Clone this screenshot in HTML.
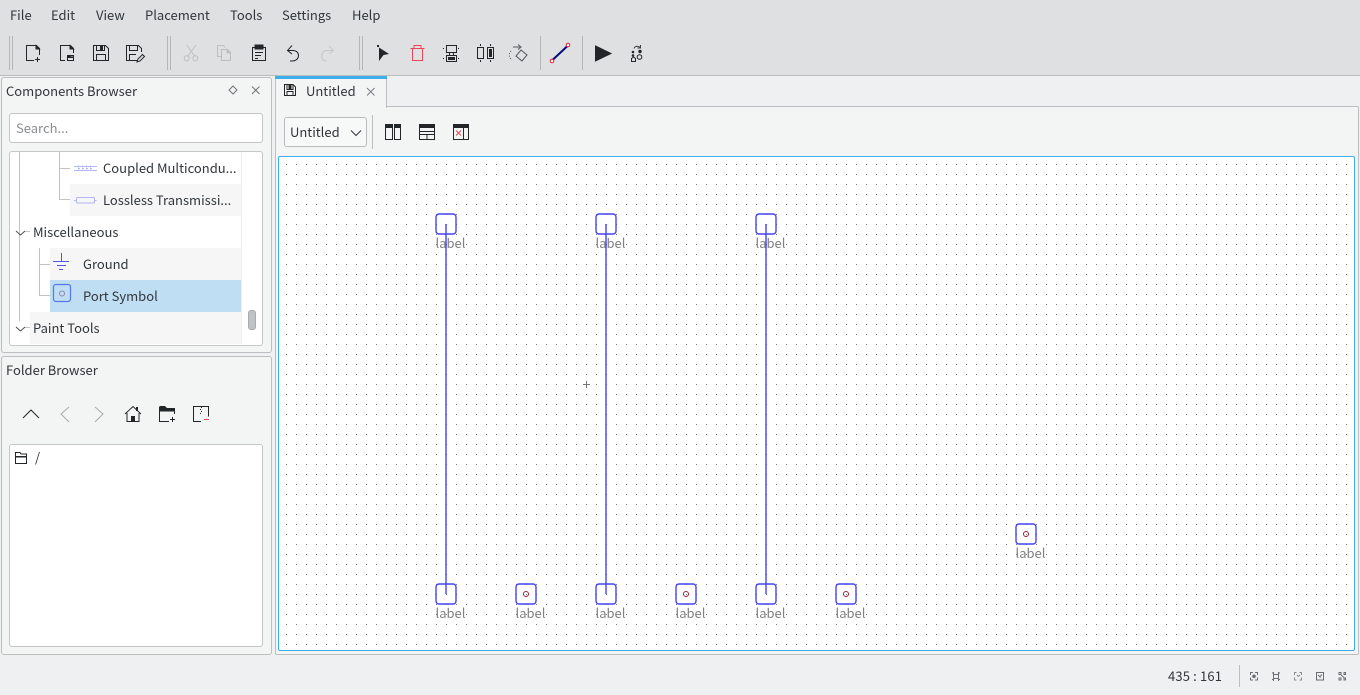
<!DOCTYPE html>
<html>
<head>
<meta charset="utf-8">
<style>
html,body{margin:0;padding:0;width:1360px;height:695px;overflow:hidden;background:#eff0f1;}
body{position:relative;font-family:"Noto Sans CJK SC","DejaVu Sans","Liberation Sans",sans-serif;font-size:13px;color:#31363b;}
.a{position:absolute;box-sizing:border-box;}
.t{position:absolute;white-space:nowrap;line-height:18px;height:18px;}
svg{position:absolute;overflow:visible;}
</style>
</head>
<body>
<div class="a" style="left:0;top:0;width:1360px;height:76px;background:#dee0e2;border-bottom:1px solid #b9bbbd;"></div>

<span class="t" style="left:10px;top:6px;">File</span>
<span class="t" style="left:51px;top:6px;">Edit</span>
<span class="t" style="left:96px;top:6px;">View</span>
<span class="t" style="left:145px;top:6px;">Placement</span>
<span class="t" style="left:230px;top:6px;">Tools</span>
<span class="t" style="left:282px;top:6px;">Settings</span>
<span class="t" style="left:352px;top:6px;">Help</span>

<!-- Toolbar icons -->
<svg style="left:0;top:0" width="680" height="76" fill="none" stroke="#232629" stroke-width="1">
  <g stroke="#b4b6b8">
    <path d="M9.500 36v34M12.500 36v34M167.500 36v34M170.500 36v34M359.500 36v34M362.500 36v34M540.500 36v34M582.500 36v34"/>
  </g>
  <!-- new -->
  <path d="M34 60.500H26.500V45.500H36.500L39.500 48.500V55"/><path d="M36 45.500l3.500 3.500h-3.500z" fill="#232629"/><path d="M35 59.500h5M37.500 57v5"/>
  <!-- open -->
  <path d="M65 60.500H60.500V45.500H70.500L73.500 48.500V53"/><path d="M70 45.500l3.500 3.500h-3.500z" fill="#232629"/><path d="M67 55h3l1 1.500h3V58h-7z" fill="#232629" stroke="none"/><rect x="67.500" y="55.500" width="6" height="5"/>
  <!-- save -->
  <path d="M93.500 45.500V60.500H108.500V48.500L105.500 45.500Z"/><path d="M96.500 45.500V50.500H104.500V45.500M96.500 60.500V54.500H105.500V60.500"/><path d="M100 46h3v4h-3z" fill="#232629" stroke="none"/>
  <!-- save as -->
  <path d="M138 60.500H126.500V45.500H138.500L141.500 48.500V52"/><path d="M129.500 45.500V50.500H137.500V45.500M129.500 60.500V54.500H136"/><path d="M137 62l1-3 4.500-4.500 2 2L140 61z" stroke-width="1"/>
  <!-- cut -->
  <g stroke="#bdbfc1"><path d="M186.700 45L195 56.500M196 45L187.500 56.500"/><circle cx="186.700" cy="58.300" r="2.500"/><circle cx="195.300" cy="58.300" r="2.500"/></g>
  <!-- copy -->
  <g stroke="#bdbfc1"><path d="M221 56.500H217.500V45.500H223.500L225 47.500"/><path d="M221.500 60.500V49.500H227.500L230.500 52.500V60.500Z"/><path d="M227 49.500l3.500 3.500h-3.500z" fill="#bdbfc1"/></g>
  <!-- paste -->
  <path d="M252.500 47.500V60.500H265.500V47.500Z"/><path d="M255 45h8v4h-8z" fill="#232629" stroke="#232629"/><path d="M255 52.500h8M255 55.500h6M255 58.500h3"/>
  <!-- undo -->
  <path d="M288 50.500H293C300.500 50.500 300.500 61 292 61H290"/><path d="M292 45.500L287.500 50.500L292 54"/>
  <!-- redo -->
  <g stroke="#c4c6c8"><path d="M333 50.500H327C320 50.500 320 61 326 61"/><path d="M329 46l4.500 4.500L329 54"/></g>
  <!-- select -->
  <rect x="377" y="45" width="2" height="2" fill="#232629" stroke="none"/>
  <path d="M379 47.500L389 54L383.500 55L379 61Z" fill="#232629" stroke="none"/>
  <!-- delete -->
  <g stroke="#e8475a"><path d="M410.500 48.500H424.500M414 48V45.500H421V48M412.500 48.500V60.500H422.500V48.500"/></g>
  <!-- group -->
  <path d="M446.500 45.500h10v7h-10zM449.500 52.500v3M453.500 52.500v3"/><rect x="446.500" y="55.500" width="10" height="6"/><rect x="448" y="57" width="7" height="3" fill="#232629" stroke="none"/>
  <path d="M443 48.500h2M458 48.500h2M443 58.500h2M458 58.500h2" stroke-dasharray="1 1"/>
  <!-- mirror -->
  <path d="M477.500 47.500h6v11h-6z"/><rect x="487.500" y="47.500" width="6" height="11"/><rect x="489" y="49" width="3" height="8" fill="#232629" stroke="none"/><path d="M480.500 44v2M490.500 44v2M480.500 60v2M490.500 60v2"/>
  <!-- rotate -->
  <path d="M511 51a6 6 0 0 0 1 9" stroke-dasharray="1 1.500" stroke="#55595d"/><path d="M513 47h7M518 44.500l3 2.500-3 2.500" stroke="#55595d"/><path d="M521 50l6 5-5 6-6-5z" stroke="#55595d"/>
  <!-- wire -->
  <path d="M552 60.500L568 45.500" stroke="#0a0a80" stroke-width="2"/>
  <circle cx="552" cy="61" r="1.800" stroke="#e8192c" fill="#fff"/><circle cx="568" cy="45" r="1.800" stroke="#e8192c" fill="#fff"/>
  <!-- play -->
  <path d="M595.500 46L611 53.500L595.500 61Z" fill="#232629" stroke="#232629"/>
  <!-- simulation settings -->
  <path d="M634 48.500a3.500 3.500 0 0 1 6-1M640.500 45v3h-3" stroke="#3a3d40"/><circle cx="633" cy="52" r="1.300" fill="#232629" stroke="none"/><circle cx="640" cy="51.500" r="1.700" fill="#232629" stroke="none"/><circle cx="633" cy="55.500" r="1.300" fill="#232629" stroke="none"/><circle cx="639.500" cy="57" r="2.300"/><path d="M631.500 61.500v-3l2-1.500 2 1.500v3z"/>
</svg>

<!-- Components Browser -->
<div class="a" style="left:1px;top:77px;width:271px;height:276px;background:#f3f5f5;border:1px solid #bcbebf;border-radius:3px;"></div>
<span class="t" style="left:6px;top:82px;">Components Browser</span>
<div class="a" style="left:9px;top:113px;width:254px;height:30px;background:#fff;border:1px solid #c4c6c8;border-radius:3px;"></div>
<span class="t" style="left:16px;top:119px;color:#8a8d90;">Search...</span>
<div class="a" style="left:9px;top:151px;width:254px;height:195px;background:#fff;border:1px solid #c4c6c8;border-radius:3px;"></div>
<div class="a" style="left:70px;top:184px;width:171px;height:32px;background:#f6f6f6;"></div>
<div class="a" style="left:50px;top:248px;width:191px;height:32px;background:#f6f6f6;"></div>
<div class="a" style="left:50px;top:280px;width:191px;height:32px;background:#bfdef4;"></div>
<div class="a" style="left:30px;top:312px;width:211px;height:32px;background:#f6f6f6;"></div>
<div class="a" style="left:241px;top:152px;width:1px;height:192px;background:#eeeeee;"></div>
<div class="a" style="left:248px;top:310px;width:8px;height:20px;background:#c0c2c3;border:1px solid #a8aaac;border-radius:3px;"></div>

<svg style="left:0;top:0" width="275" height="360" fill="none" stroke="#c3c3c3" stroke-width="1">
  <path d="M19.500 152V321M59.500 152V199.500H70M59.500 168.500H70M39.500 248V295.500H50M39.500 264.500H50"/>
  <g stroke="#4a4f54"><path d="M16 231l4.500 4 4.500-4M16 327l4.500 4 4.500-4"/></g>
  <path d="M25 231.500h5M25 327.500h5" stroke="#c3c3c3"/>
  <!-- dock icons -->
  <g stroke="#6f7376"><path d="M233 86l4 4-4 4-4-4zM252 86.500l7.500 7.500M259.500 86.500l-7.500 7.500"/><path d="M233 365l4 4-4 4-4-4zM252 365l7.500 7.500M259.500 365l-7.500 7.500"/></g>
  <!-- coupled -->
  <g stroke="#b4b4fa"><path d="M74 166.500H97M74 170.500H97"/><path d="M78.500 165.500v6M82.500 165.500v6M86.500 165.500v6M90.500 165.500v6" stroke-dasharray="1 1"/><path d="M78 168.500H92" stroke-dasharray="2 2"/></g>
  <!-- lossless -->
  <g stroke="#b4b4fa"><rect x="76.500" y="197.500" width="18" height="5.500" rx="1"/><path d="M74 200.500h2.500M94.500 200.500h2"/></g>
  <!-- ground -->
  <g stroke="#5353ee"><path d="M61.500 253V262M53 261.500H69M57 265.500H66M59 269.500H63"/></g>
  <!-- port -->
  <rect x="53.500" y="284.500" width="17" height="17" rx="2.500" stroke="#5577f0" stroke-width="1.200"/>
  <circle cx="62" cy="293.500" r="2.500" stroke="#8f86a6"/>
</svg>

<span class="t" style="left:103px;top:159px;">Coupled Multicondu...</span>
<span class="t" style="left:103px;top:191px;">Lossless Transmissi...</span>
<span class="t" style="left:33px;top:223px;">Miscellaneous</span>
<span class="t" style="left:83px;top:255px;">Ground</span>
<span class="t" style="left:83px;top:287px;">Port Symbol</span>
<span class="t" style="left:33px;top:319px;">Paint Tools</span>

<!-- Folder Browser -->
<div class="a" style="left:1px;top:356px;width:271px;height:299px;background:#f3f5f5;border:1px solid #bcbebf;border-radius:3px;"></div>
<span class="t" style="left:6px;top:361px;">Folder Browser</span>
<div class="a" style="left:9px;top:444px;width:254px;height:203px;background:#fff;border:1px solid #c4c6c8;border-radius:3px;"></div>
<span class="t" style="left:35px;top:448px;">/</span>
<svg style="left:0;top:0" width="275" height="480" fill="none" stroke="#232629" stroke-width="1">
  <path d="M23 418L31 410L39 418" />
  <path d="M69 407L61 414L69 422M95 407L103 414L95 422" stroke="#a8aaac"/>
  <!-- home -->
  <path d="M125 414L133 406.500L141 414M127 413V421.500H139V413"/><rect x="131" y="416" width="4" height="5.500" fill="#232629" stroke="none"/><rect x="136" y="407" width="2" height="4" fill="#232629" stroke="none"/>
  <!-- new folder -->
  <path d="M160 406h5l2 2h8v3.500h-15z" fill="#232629" stroke="none"/><path d="M159.500 406.500V421.500H169M174.500 409V414M172.500 417v5M170 419.500h5"/>
  <!-- archive -->
  <path d="M201 421.500H193.500V406.500H208.500V416.500"/><path d="M201.500 407v1M200.500 409v1M201.500 411v1M200.500 413v1"/><path d="M204 419.500H209" stroke="#e8475a"/>
  <!-- tree folder -->
  <path d="M15.500 463.500V452.500H20L21 454H26.500V463.500Z"/><path d="M16 456h11v1.500H16z" fill="#232629" stroke="none"/>
</svg>

<!-- Main area -->
<div class="a" style="left:275px;top:106px;width:1084px;height:549px;background:#f3f5f5;border:1px solid #bcbebf;border-radius:2px;"></div>
<div class="a" style="left:275px;top:76px;width:112px;height:32px;background:#f3f5f5;border:1px solid #bcbebf;border-top:0;border-bottom:0;"></div>
<div class="a" style="left:275px;top:76px;width:112px;height:3px;background:#3daee9;"></div>
<span class="t" style="left:306px;top:82px;">Untitled</span>
<div class="a" style="left:284px;top:117px;width:83px;height:30px;background:#f7f8f8;border:1px solid #b9bbbd;border-radius:3px;"></div>
<span class="t" style="left:290px;top:123px;">Untitled</span>
<svg style="left:0;top:0" width="500" height="156" fill="none" stroke="#232629" stroke-width="1">
  <!-- tab icon -->
  <path d="M284.500 84.500V95.500H295.500V87L293 84.500Z"/><path d="M287 84.500V89.500H293V84.500M287 95.500V91.500H293V95.500" />
  <path d="M288.500 85h3v4h-3z" fill="#232629" stroke="none"/>
  <path d="M367 88l7.500 7.500M374.500 88l-7.500 7.500" stroke="#7a7e81"/>
  <path d="M351 130.500l5 5 5-5" stroke="#31363b"/>
  <path d="M372.500 115V149" stroke="#bcbebf"/>
  <!-- split icons -->
  <path d="M385.500 124.500H392.500V139.500H385.500ZM394.500 124.500H400.500V139.500H394.500Z"/>
  <path d="M385 124h8v4h-8zM394 124h7v4h-7z" fill="#232629" stroke="none"/>
  <rect x="419.500" y="124.500" width="15" height="15"/><path d="M419 124h16v4h-16z" fill="#232629" stroke="none"/><path d="M419.500 131.500H434.500M419.500 134.500H434.500M427 134.500V139.500"/>
  <rect x="453.500" y="124.500" width="15" height="15"/><path d="M453 124h16v4h-16z" fill="#232629" stroke="none"/><path d="M463.500 128V139.500"/><path d="M456 130.500l5 5M461 130.500l-5 5" stroke="#e8475a"/>
</svg>

<!-- Canvas -->
<div class="a" style="left:278px;top:156px;width:1077px;height:495px;background:#fff;border:1px solid #3daee9;border-radius:2px;"></div>
<svg style="left:0;top:0" width="1360" height="695">
  <defs>
    <pattern id="g" x="286" y="164" width="10" height="10" patternUnits="userSpaceOnUse">
      <rect x="0" y="0" width="1" height="1" fill="#757575"/>
    </pattern>
  </defs>
  <rect x="280" y="158" width="1073" height="491" fill="url(#g)"/>
  <path d="M583 384.500H590M586.500 381V388" stroke="#777" stroke-width="1"/>
  <g fill="none" stroke="#4444f2" stroke-width="1">
    <rect x="436" y="214" width="20" height="20" rx="3" stroke-width="1.400"/>
    <rect x="596" y="214" width="20" height="20" rx="3" stroke-width="1.400"/>
    <rect x="756" y="214" width="20" height="20" rx="3" stroke-width="1.400"/>
    <rect x="436" y="584" width="20" height="20" rx="3" stroke-width="1.400"/>
    <rect x="516" y="584" width="20" height="20" rx="3" stroke-width="1.400"/>
    <rect x="596" y="584" width="20" height="20" rx="3" stroke-width="1.400"/>
    <rect x="676" y="584" width="20" height="20" rx="3" stroke-width="1.400"/>
    <rect x="756" y="584" width="20" height="20" rx="3" stroke-width="1.400"/>
    <rect x="836" y="584" width="20" height="20" rx="3" stroke-width="1.400"/>
    <rect x="1016" y="524" width="20" height="20" rx="3" stroke-width="1.400"/>
    <path d="M446 224V594M606 224V594M766 224V594" stroke-width="1.400"/>
  </g>
  <g fill="none" stroke="#a02030" stroke-width="1">
    <circle cx="526" cy="594" r="2.500"/><circle cx="686" cy="594" r="2.500"/><circle cx="846" cy="594" r="2.500"/><circle cx="1026" cy="534" r="2.500"/>
  </g>
</svg>
<div style="color:#808080;">
<span class="t" style="left:435.500px;top:234px;">label</span>
<span class="t" style="left:595.500px;top:234px;">label</span>
<span class="t" style="left:755.500px;top:234px;">label</span>
<span class="t" style="left:435.500px;top:604px;">label</span>
<span class="t" style="left:515.500px;top:604px;">label</span>
<span class="t" style="left:595.500px;top:604px;">label</span>
<span class="t" style="left:675.500px;top:604px;">label</span>
<span class="t" style="left:755.500px;top:604px;">label</span>
<span class="t" style="left:835.500px;top:604px;">label</span>
<span class="t" style="left:1015.500px;top:544px;">label</span>
</div>

<!-- Status bar -->
<span class="t" style="left:1168px;top:667px;letter-spacing:0.150px;">435 : 161</span>
<svg style="left:0;top:0" width="1360" height="695" fill="none" stroke="#6b6f73" stroke-width="1">
  <path d="M1239.500 665V687" stroke="#bcbebf"/>
  <!-- fit: corner ticks with dot -->
  <path d="M1250.500 675v-2.500h2.500M1255 672.500h2.500v2.500M1257.500 677.500v2.500h-2.500M1253 680h-2.500v-2.500"/>
  <circle cx="1254" cy="676.300" r="1.800" fill="#6b6f73" stroke="none"/>
  <!-- fit selected -->
  <path d="M1272 673h2M1278 673h2M1272 679.500h2M1278 679.500h2M1273.500 672v9M1278.500 672v9M1274 674.500h4M1274 678.500h4"/>
  <!-- zoom in dashed -->
  <path d="M1294.500 675v-2.500h2M1299.500 672.500h2v2.500M1301.500 677.500v2.500h-2M1296.500 680h-2v-2.500M1297 675l1.500 1.500M1300 675l-1.500 1.500" stroke="#8a8e91"/>
  <!-- zoom out -->
  <rect x="1316.500" y="672.500" width="7" height="7.500"/><path d="M1318 675l2.500 2.500M1322 674.500l-2 2"/>
  <!-- actual size -->
  <path d="M1339 672.500h2v2h-2zM1344 672.500h1.500v2h-1.500zM1339 678h2v2h-2zM1344 678h1.500v2h-1.500z"/><path d="M1341 675l3 2.500"/>
</svg>
</body>
</html>
